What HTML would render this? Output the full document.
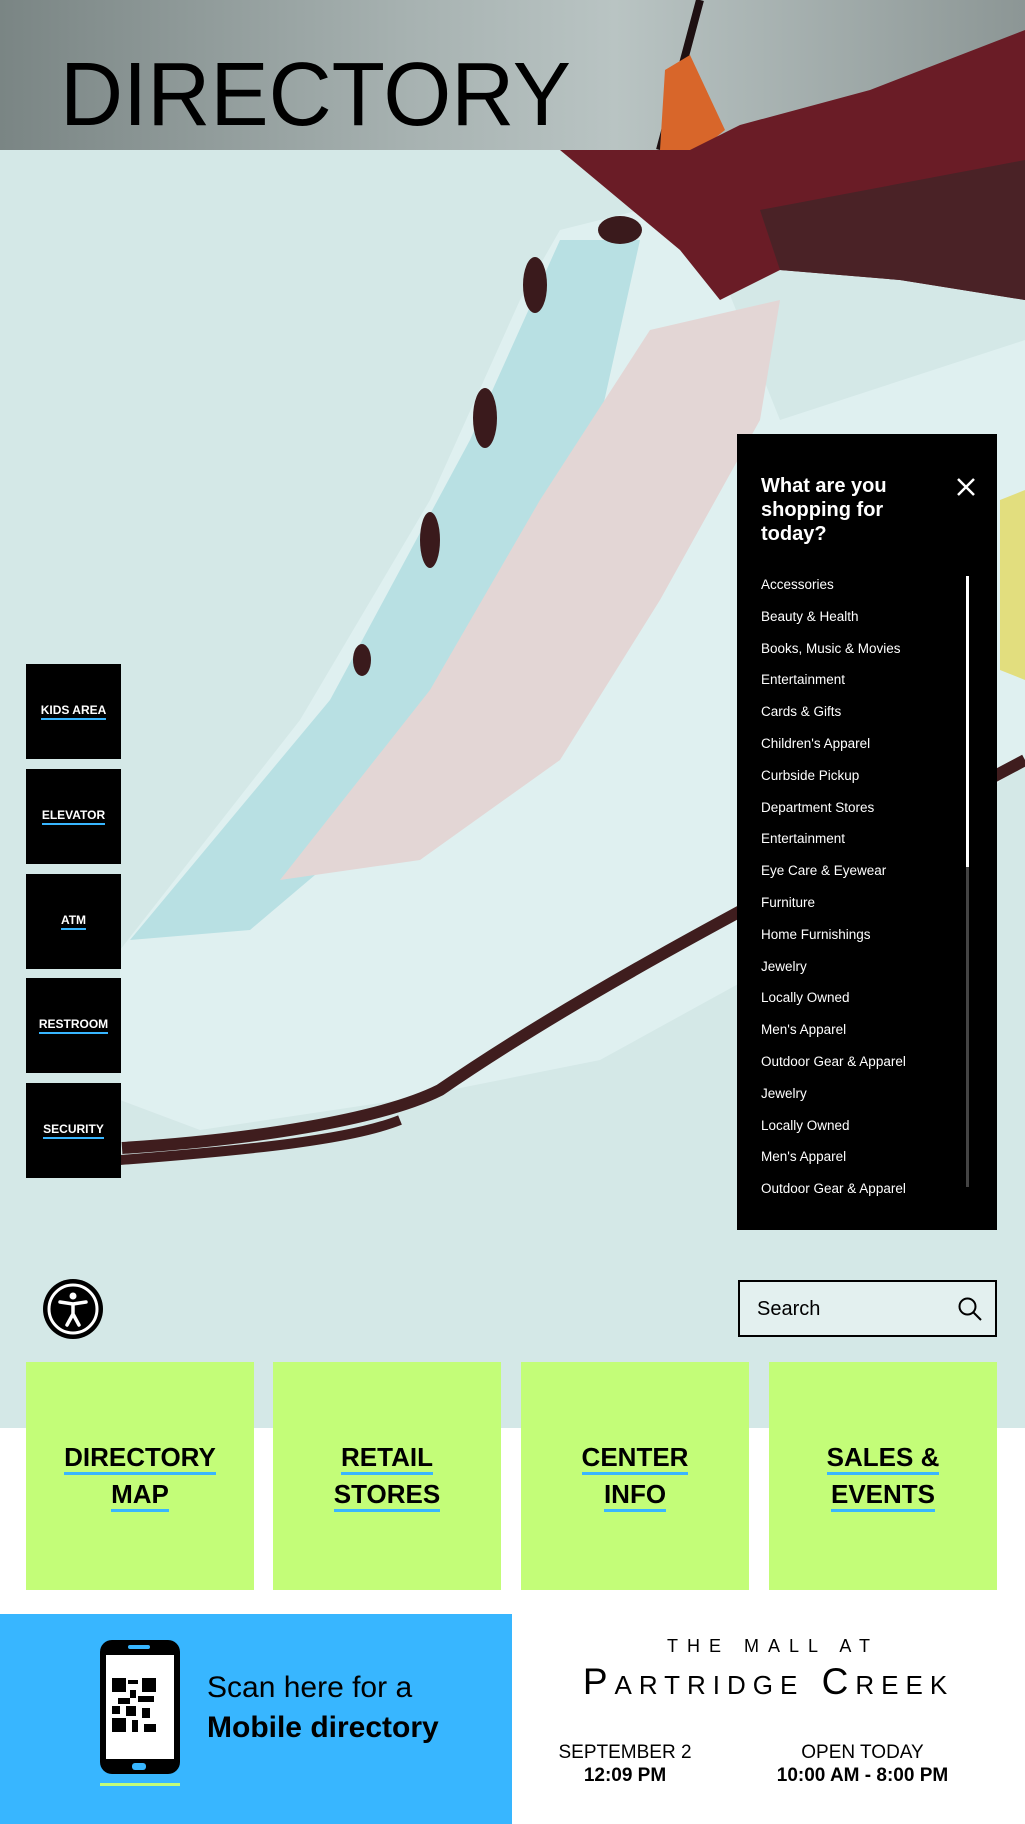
<!DOCTYPE html>
<html><head><meta charset="utf-8"><style>
*{margin:0;padding:0;box-sizing:border-box}
body{width:1025px;height:1824px;position:relative;overflow:hidden;background:#fff;font-family:"Liberation Sans",sans-serif}
.hero{position:absolute;left:0;top:0;width:1025px;height:1428px;background:#d4e8e7}
.hdr{position:absolute;left:0;top:0;width:1025px;height:150px;background:linear-gradient(90deg,#7a8584 0%,#a7b2b1 40%,#b9c4c3 60%,#8c9695 100%)}
.title{position:absolute;left:60px;top:44px;font-size:90px;color:#000;transform:scaleX(0.97);transform-origin:left}
svg.shoe{position:absolute;left:0;top:0}
.panel{position:absolute;left:737px;top:434px;width:260px;height:796px;background:#000;color:#fff}
.panel h2{position:absolute;left:24px;top:40px;font-size:20px;line-height:24px;font-weight:bold}
.x{position:absolute;left:218px;top:42px;width:22px;height:22px}
.list{position:absolute;left:24px;top:135px;font-size:13.5px;line-height:31.8px}
.sb{position:absolute;left:229px;top:142px;width:3px;height:611px;background:#444}
.sb i{display:block;width:3px;height:291px;background:#fff}
.btn{position:absolute;left:26px;width:95px;height:95px;background:#000;color:#fff;font-size:12px;font-weight:bold;display:flex;align-items:center;justify-content:center}
.btn span{border-bottom:2px solid #38b6ff;padding-bottom:1px}
.acc{position:absolute;left:43px;top:1279px;width:60px;height:60px;border-radius:50%;background:#000}
.search{position:absolute;left:738px;top:1280px;width:259px;height:57px;border:2px solid #000;background:rgba(255,255,255,0.35);font-size:20px;padding:16px 0 0 17px}
.tile{position:absolute;top:1362px;width:228px;height:228px;background:#c3fd78;display:flex;align-items:center;justify-content:center;text-align:center;font-weight:bold;font-size:26px;line-height:37px}
.tile span{border-bottom:3px solid #38b6ff}
.blue{position:absolute;left:0;top:1614px;width:512px;height:210px;background:#38b6ff}
</style></head><body>
<div class="hero"></div>
<svg class="shoe" width="1025" height="1428" viewBox="0 0 1025 1428">
<path d="M120 950 L300 720 L430 500 L520 300 L560 230 L640 210 L720 270 L780 420 L1025 340 L1025 760 L800 950 L600 1060 L400 1100 L200 1130 L120 1100 Z" fill="#dff0f0"/>
<path d="M130 940 L330 700 L470 440 L560 240 L640 240 L600 420 L510 620 L380 820 L250 930 Z" fill="#b8e0e3"/>
<path d="M280 880 L430 690 L540 500 L650 330 L780 300 L760 420 L660 600 L560 760 L420 860 Z" fill="#e3d6d5"/>
<path d="M560 150 L610 110 L740 95 L870 60 L1025 25 L1025 300 L900 280 L780 270 L720 300 L680 250 Z" fill="#6a1c26"/>
<path d="M760 210 L1025 160 L1025 300 L900 280 L780 270 Z" fill="#4a2226"/>
<path d="M122 1148 C250 1140 380 1120 440 1090 C600 980 800 880 1025 760" stroke="#3f1d1e" stroke-width="12" fill="none"/>
<path d="M120 1160 C250 1150 350 1140 400 1120" stroke="#3f1d1e" stroke-width="10" fill="none"/>
<ellipse cx="620" cy="230" rx="22" ry="14" fill="#3a1a1c"/>
<ellipse cx="535" cy="285" rx="12" ry="28" fill="#3a1a1c"/>
<ellipse cx="485" cy="418" rx="12" ry="30" fill="#3a1a1c"/>
<ellipse cx="430" cy="540" rx="10" ry="28" fill="#3a1a1c"/>
<ellipse cx="362" cy="660" rx="9" ry="16" fill="#3a1a1c"/>
<path d="M1000 500 L1025 490 L1025 680 L1000 670 Z" fill="#e2de7e"/>
</svg>
<div class="hdr"></div>
<svg class="shoe" width="1025" height="150" viewBox="0 0 1025 150">
<path d="M700 0 L660 150" stroke="#1e1012" stroke-width="8"/>
<path d="M665 70 L690 55 L725 130 L700 150 L660 150 Z" fill="#d8662a"/>
<path d="M690 150 L740 125 L870 90 L1025 30 L1025 150 Z" fill="#6a1c26"/>
</svg>
<div class="title">DIRECTORY</div>

<div class="btn" style="top:664px"><span>KIDS AREA</span></div>
<div class="btn" style="top:769px"><span>ELEVATOR</span></div>
<div class="btn" style="top:874px"><span>ATM</span></div>
<div class="btn" style="top:978px"><span>RESTROOM</span></div>
<div class="btn" style="top:1083px"><span>SECURITY</span></div>

<div class="panel">
<h2>What are you<br>shopping for<br>today?</h2>
<svg class="x" viewBox="0 0 22 22"><path d="M3 3L19 19M19 3L3 19" stroke="#fff" stroke-width="2.5"/></svg>
<div class="list">Accessories<br>Beauty &amp; Health<br>Books, Music &amp; Movies<br>Entertainment<br>Cards &amp; Gifts<br>Children's Apparel<br>Curbside Pickup<br>Department Stores<br>Entertainment<br>Eye Care &amp; Eyewear<br>Furniture<br>Home Furnishings<br>Jewelry<br>Locally Owned<br>Men's Apparel<br>Outdoor Gear &amp; Apparel<br>Jewelry<br>Locally Owned<br>Men's Apparel<br>Outdoor Gear &amp; Apparel</div>
<div class="sb"><i></i></div>
</div>

<div class="acc"><svg width="60" height="60" viewBox="0 0 60 60"><circle cx="30" cy="30" r="24" fill="none" stroke="#fff" stroke-width="3"/><circle cx="30" cy="17" r="3.5" fill="#fff"/><path d="M17 23L30 25L43 23M30 25L30 35M30 35L24 46M30 35L36 46" stroke="#fff" stroke-width="3.5" fill="none" stroke-linecap="round"/></svg></div>

<div class="search">Search<svg style="position:absolute;right:12px;top:14px" width="26" height="26" viewBox="0 0 26 26"><circle cx="10.5" cy="10.5" r="8" fill="none" stroke="#000" stroke-width="2"/><path d="M16.5 16.5L24 24" stroke="#000" stroke-width="2"/></svg></div>

<div class="tile" style="left:26px"><div><span>DIRECTORY</span><br><span>MAP</span></div></div>
<div class="tile" style="left:273px"><div><span>RETAIL</span><br><span>STORES</span></div></div>
<div class="tile" style="left:521px"><div><span>CENTER</span><br><span>INFO</span></div></div>
<div class="tile" style="left:769px"><div><span>SALES &amp;</span><br><span>EVENTS</span></div></div>

<div class="blue">
<svg style="position:absolute;left:98px;top:24px" width="84" height="148" viewBox="0 0 84 148">
<rect x="2" y="2" width="80" height="134" rx="12" fill="#000"/>
<rect x="8" y="17" width="68" height="104" fill="#fff"/>
<rect x="30" y="7" width="22" height="4" rx="2" fill="#38b6ff"/>
<rect x="34" y="125" width="14" height="7" rx="3" fill="#38b6ff"/>
<g fill="#000"><rect x="14" y="40" width="14" height="14"/><rect x="44" y="40" width="14" height="14"/><rect x="14" y="80" width="14" height="14"/>
<rect x="30" y="42" width="10" height="4"/><rect x="32" y="52" width="6" height="8"/><rect x="20" y="60" width="12" height="6"/><rect x="40" y="58" width="16" height="6"/><rect x="28" y="68" width="10" height="10"/><rect x="44" y="70" width="8" height="10"/><rect x="34" y="82" width="6" height="12"/><rect x="46" y="86" width="12" height="8"/><rect x="14" y="68" width="8" height="8"/></g>
<rect x="2" y="145" width="80" height="3" fill="#c3fd78"/>
</svg>
<div style="position:absolute;left:207px;top:54px;font-size:30px;line-height:40px;color:#000">Scan here for a<br><b>Mobile directory</b></div>
</div>

<div style="position:absolute;left:512px;top:1636px;width:513px;text-align:center;color:#000">
<div style="font-size:18px;letter-spacing:9px;padding-left:9px">THE MALL AT</div>
<div style="font-size:37px;letter-spacing:7px;margin-top:4px;font-variant:small-caps">Partridge Creek</div>
</div>
<div style="position:absolute;left:540px;top:1741px;width:170px;text-align:center;font-size:19px;line-height:23px">SEPTEMBER 2<br><b>12:09 PM</b></div>
<div style="position:absolute;left:755px;top:1741px;width:215px;text-align:center;font-size:19px;line-height:23px">OPEN TODAY<br><b>10:00 AM - 8:00 PM</b></div>
</body></html>
